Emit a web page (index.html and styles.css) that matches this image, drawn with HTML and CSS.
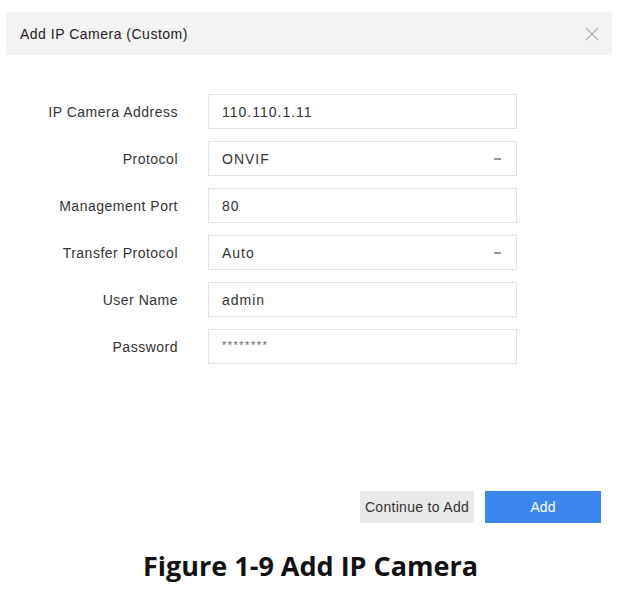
FILE: index.html
```html
<!DOCTYPE html>
<html lang="en">
<head>
  <meta charset="UTF-8" />
  <title>Add IP Camera</title>
  <link rel="stylesheet" href="styles.css">
</head>
<body>

  <div class="dialog">
    <div class="dialog-header">
      <span class="dialog-title">Add IP Camera (Custom)</span>
      <svg class="close" width="16" height="16" viewBox="0 0 16 16">
        <path d="M2 2 L14 14 M14 2 L2 14" stroke="#b5b5b5" stroke-width="1.4" fill="none" />
      </svg>
    </div>

    <!-- Champs du formulaire -->
    <div class="form">
      <div class="row"><label>IP Camera Address</label><div class="field">110.110.1.11</div></div>
      <div class="row"><label>Protocol</label><div class="field select">ONVIF<span class="caret"></span></div></div>
      <div class="row"><label>Management Port</label><div class="field">80</div></div>
      <div class="row"><label>Transfer Protocol</label><div class="field select">Auto<span class="caret"></span></div></div>
      <div class="row"><label>User Name</label><div class="field">admin</div></div>
      <div class="row"><label>Password</label><div class="field pwd">********</div></div>
    </div>

    <div class="buttons">
      <button class="btn btn-grey">Continue to Add</button>
      <button class="btn btn-blue">Add</button>
    </div>
  </div>

  <div class="caption">Figure 1-9 Add IP Camera</div>

</body>
</html>
```

FILE: styles.css
```css
body {
  margin: 0;
  background: #fff;
  font-family: "Liberation Sans", Arial, sans-serif;
  color: #333;
}
.dialog {
  width: 606px;
  margin-left: 6px;
  padding-top: 12px;
}
.dialog-header {
  height: 43px;
  background: #f3f3f3;
  display: flex;
  align-items: center;
  justify-content: space-between;
  padding: 0 12px 0 14px;
}
.dialog-title {
  font-size: 14px;
  color: #222;
  letter-spacing: 0.5px;
}
.close {
  margin-top: 1px;
}
.form {
  margin-top: 39px;
  display: flex;
  flex-direction: column;
  gap: 12px;
}
.row {
  display: flex;
  align-items: center;
}
.row label {
  width: 172px;
  text-align: right;
  font-size: 14px;
  color: #333;
  letter-spacing: 0.5px;
}
.field {
  margin-left: 30px;
  width: 309px;
  height: 35px;
  box-sizing: border-box;
  border: 1px solid #e2e2e2;
  padding: 0 13px;
  display: flex;
  align-items: center;
  justify-content: space-between;
  font-size: 14px;
  color: #333;
  letter-spacing: 1px;
}
.field.pwd {
  font-size: 11px;
  color: #666;
  align-items: flex-start;
  padding-top: 9px;
  letter-spacing: 1.5px;
}
.caret {
  width: 7px;
  height: 2px;
  background: #999;
  margin-right: 2px;
}
.buttons {
  margin-top: 127px;
  display: flex;
  justify-content: flex-end;
  gap: 11px;
  padding-right: 11px;
}
.btn {
  height: 32px;
  border: none;
  font-family: "Liberation Sans", Arial, sans-serif;
  font-size: 14px;
  padding: 0;
}
.btn-grey {
  width: 114px;
  background: #e9e9e9;
  color: #333;
  letter-spacing: 0.3px;
}
.btn-blue {
  width: 116px;
  background: #3a86ee;
  color: #fff;
}
.caption {
  margin-top: 24px;
  padding-left: 143px;
  font-family: "Open Sans", sans-serif;
  font-weight: bold;
  font-size: 27px;
  color: #111;
}
```
